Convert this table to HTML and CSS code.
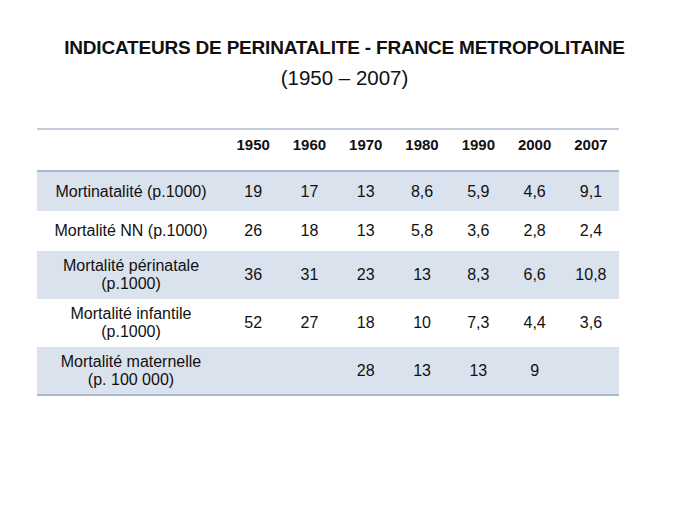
FILE: index.html
```html
<!DOCTYPE html>
<html lang="fr">
<head>
<meta charset="utf-8">
<title>Indicateurs de périnatalité</title>
<link rel="stylesheet" href="styles.css">
</head>
<body>
<div class="slide">
  <h1 class="title">INDICATEURS DE PERINATALITE - FRANCE METROPOLITAINE</h1>
  <p class="subtitle">(1950 – 2007)</p>
  <table class="data">
    <thead>
      <tr>
        <th class="label"></th>
        <th>1950</th><th>1960</th><th>1970</th><th>1980</th><th>1990</th><th>2000</th><th>2007</th>
      </tr>
    </thead>
    <tbody>
      <tr class="shaded single">
        <td class="label">Mortinatalité (p.1000)</td>
        <td>19</td><td>17</td><td>13</td><td>8,6</td><td>5,9</td><td>4,6</td><td>9,1</td>
      </tr>
      <tr class="single">
        <td class="label">Mortalité NN (p.1000)</td>
        <td>26</td><td>18</td><td>13</td><td>5,8</td><td>3,6</td><td>2,8</td><td>2,4</td>
      </tr>
      <tr class="shaded double">
        <td class="label">Mortalité périnatale<br>(p.1000)</td>
        <td>36</td><td>31</td><td>23</td><td>13</td><td>8,3</td><td>6,6</td><td>10,8</td>
      </tr>
      <tr class="double">
        <td class="label">Mortalité infantile<br>(p.1000)</td>
        <td>52</td><td>27</td><td>18</td><td>10</td><td>7,3</td><td>4,4</td><td>3,6</td>
      </tr>
      <tr class="shaded double last">
        <td class="label">Mortalité maternelle<br>(p. 100 000)</td>
        <td></td><td></td><td>28</td><td>13</td><td>13</td><td>9</td><td></td>
      </tr>
    </tbody>
  </table>
</div>
</body>
</html>
```

FILE: styles.css
```css
html, body {
  margin: 0;
  padding: 0;
  background: #ffffff;
}

.slide {
  width: 689px;
  height: 517px;
  box-sizing: border-box;
  padding-top: 35px;
  font-family: "Liberation Sans", Arial, sans-serif;
  color: #111111;
}

.title {
  margin: 0;
  text-align: center;
  font-size: 19px;
  font-weight: bold;
  letter-spacing: -0.2px;
  line-height: 26px;
}

.subtitle {
  margin: 3px 0 0 0;
  text-align: center;
  font-size: 20.5px;
  line-height: 28px;
}

.data {
  margin: 36px 0 0 37px;
  width: 582px;
  border-collapse: collapse;
  table-layout: fixed;
  font-size: 16px;
}

.data th,
.data td {
  padding: 0;
  text-align: center;
  width: 56.3px;
}

.data .label {
  width: 188px;
}

.data thead tr {
  height: 42px;
  border-top: 2px solid #c3cddd;
  border-bottom: 2px solid #a8b8d2;
}

.data th {
  vertical-align: top;
  padding-top: 6px;
  font-weight: bold;
  font-size: 15px;
  line-height: 18px;
}

.data tbody td {
  vertical-align: middle;
  line-height: 18px;
}

.data tr.single {
  height: 40px;
}

.data tr.double {
  height: 48px;
}

.data tr.shaded {
  background: #dae2ee;
}

.data tr.last {
  border-bottom: 2px solid #a9b8cf;
}
```
